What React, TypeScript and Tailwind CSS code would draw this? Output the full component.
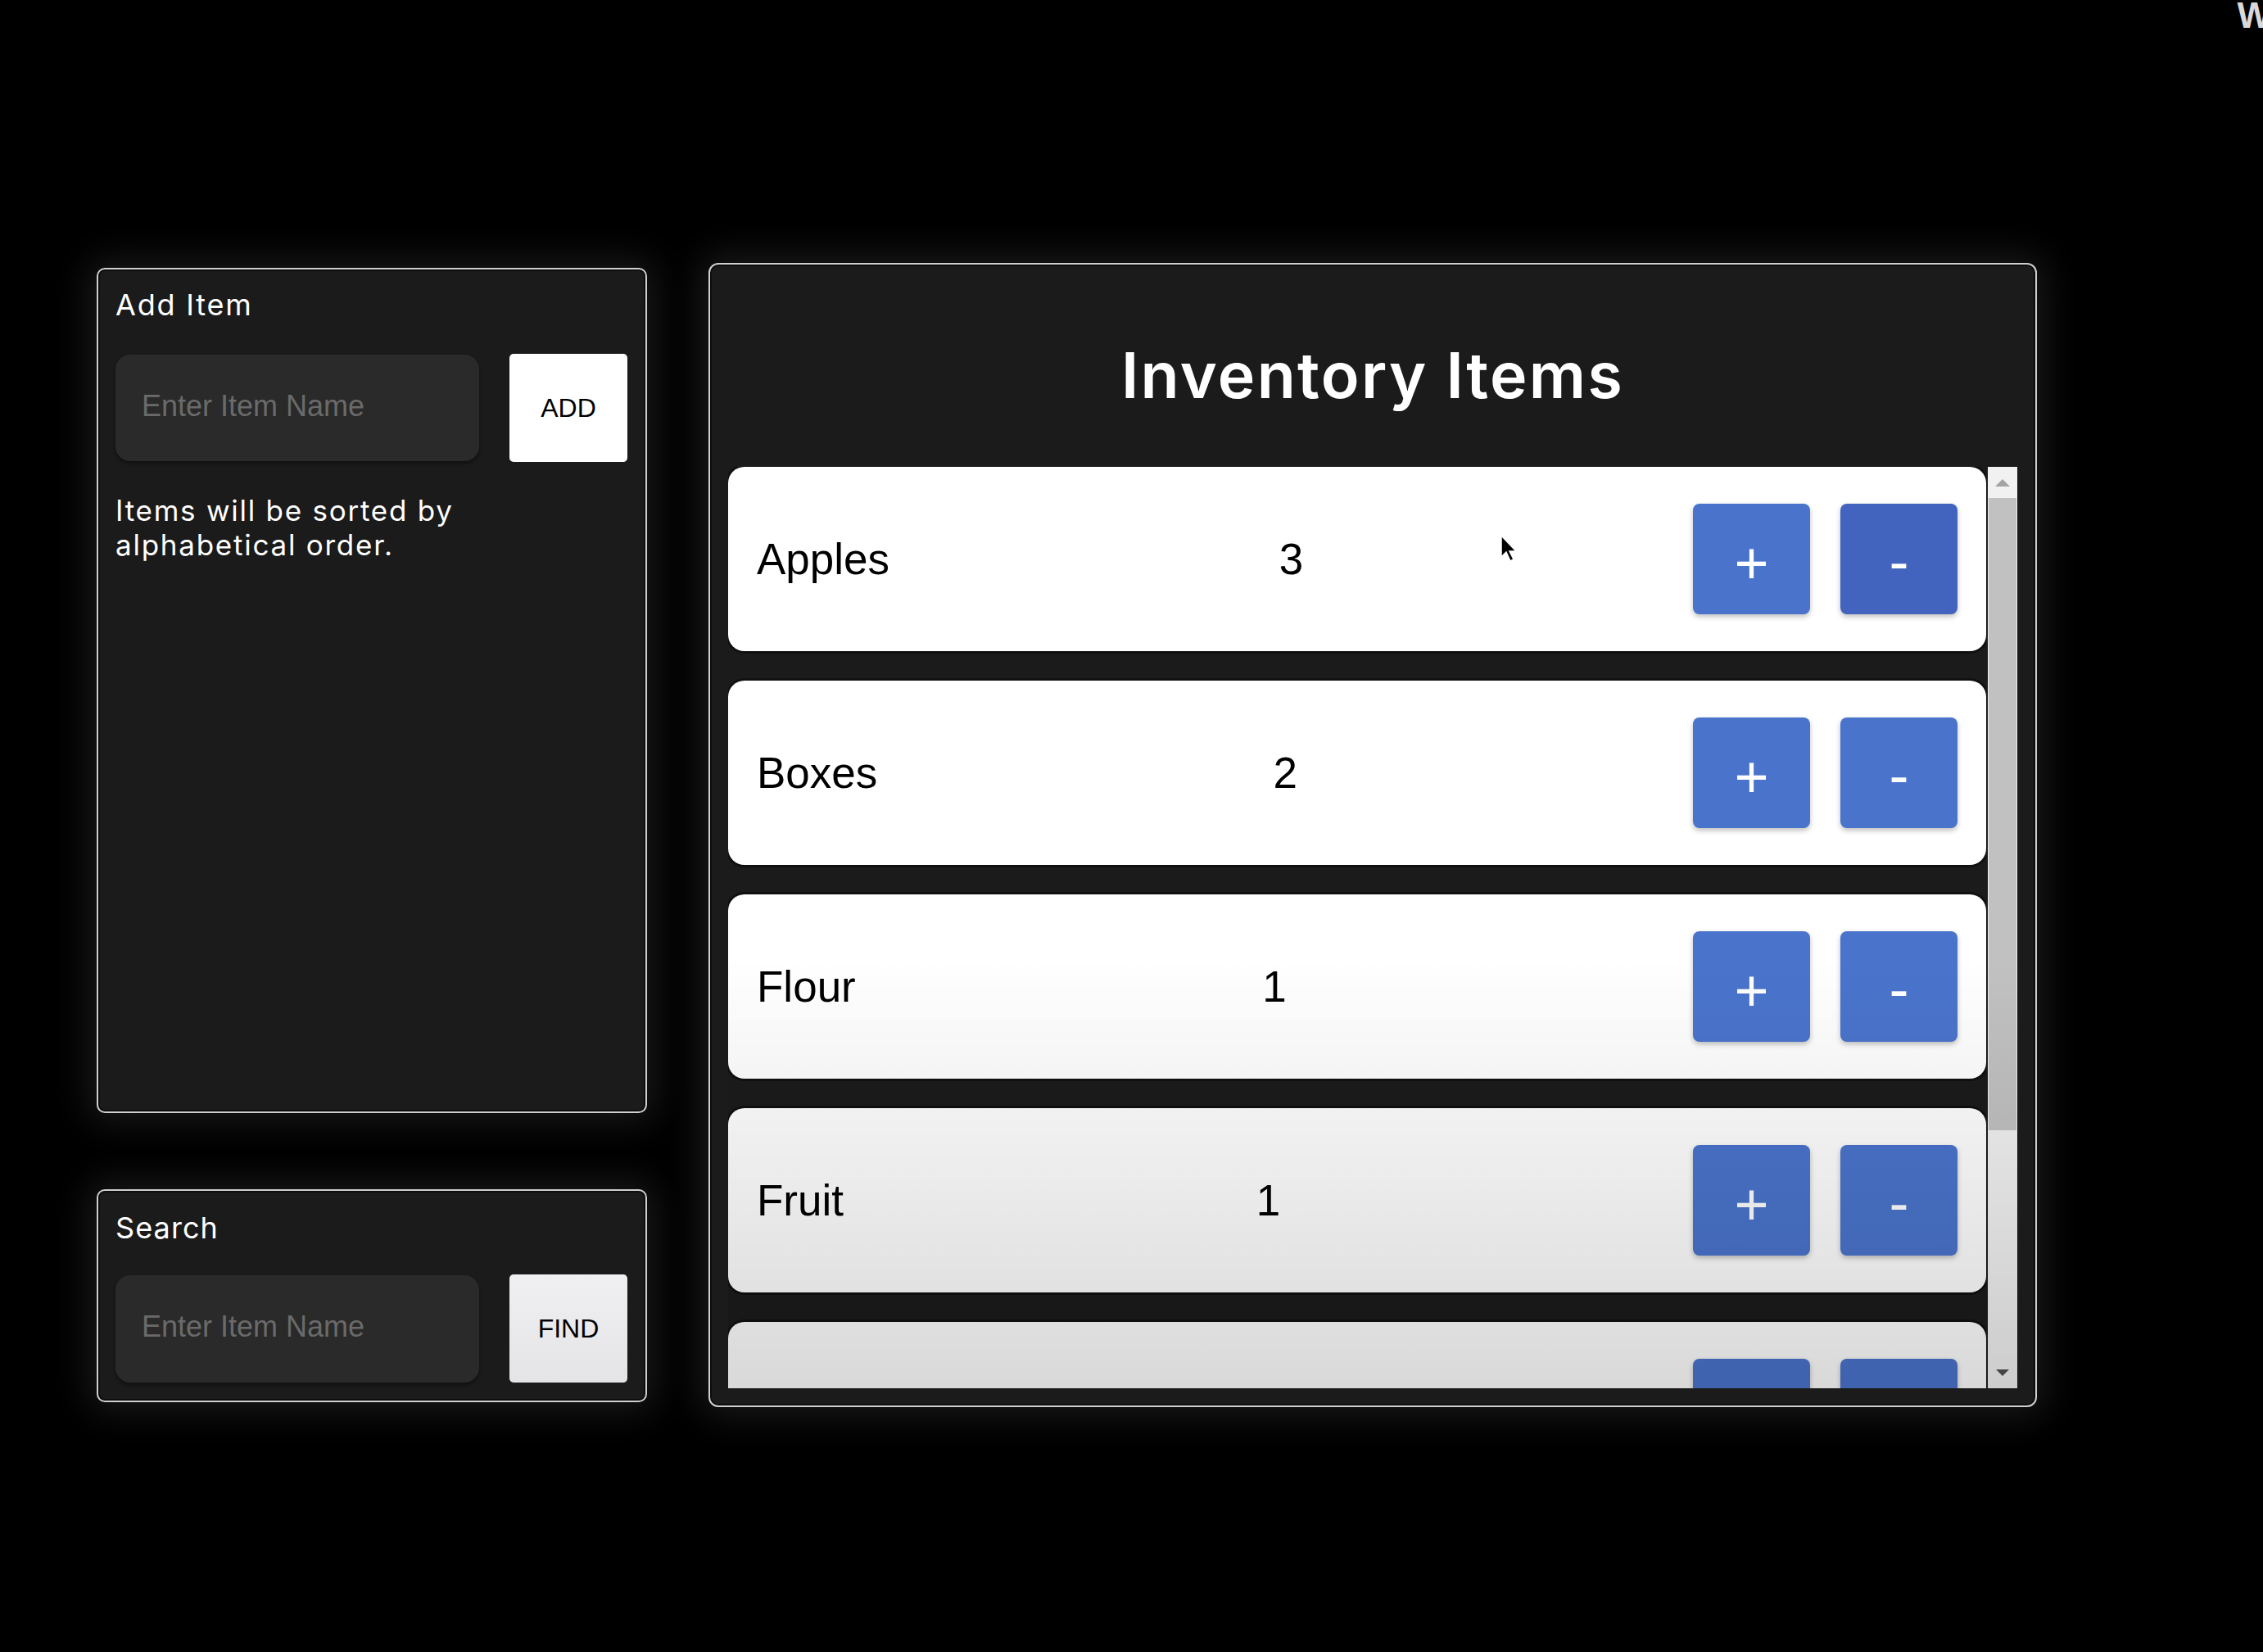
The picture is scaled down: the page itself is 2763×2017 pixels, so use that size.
import { useState } from 'react';

type Item = { name: string; count: number };

const initialItems: Item[] = [
    { name: 'Apples', count: 3 },
    { name: 'Boxes', count: 2 },
    { name: 'Flour', count: 1 },
    { name: 'Fruit', count: 1 },
];

function ItemCard({ item, active }: { item?: Item; active?: boolean }) {
    // item is undefined for the row that is only peeking in at the bottom of the list
    return (
        <div className="flex h-[225px] w-full shrink-0 items-center justify-between rounded-[20px] bg-white px-[35px] shadow-[0_0_0_3px_#101010] font-['Liberation_Sans',Arial,sans-serif] text-[53px] text-black">
            <span>{item?.name}</span>
            <span>{item?.count}</span>
            <div className="flex gap-[37px]">
                <button className="flex h-[135px] w-[143px] items-center justify-center rounded-[8px] bg-[#4a74cc] pt-[8px] text-[72px] leading-none text-white shadow-[0_3px_6px_rgba(0,0,0,0.25)]">
                    {item ? '+' : ''}
                </button>
                <button
                    className={`flex h-[135px] w-[143px] items-center justify-center rounded-[8px] pt-[4px] text-[72px] leading-none text-white shadow-[0_3px_6px_rgba(0,0,0,0.25)] ${active ? 'bg-[#4264be]' : 'bg-[#4a74cc]'}`}
                >
                    {item ? '-' : ''}
                </button>
            </div>
        </div>
    );
}

function Scrollbar() {
    return (
        <div className="flex h-full w-[36px] shrink-0 flex-col bg-[#f1f1f1]">
            <div className="flex h-[38px] items-center justify-center">
                <svg width="18" height="9" viewBox="0 0 18 9">
                    <polygon points="9,0 18,9 0,9" fill="#a3a3a3" />
                </svg>
            </div>
            <div className="mx-[1px] h-[772px] bg-[#c1c1c1]" />
            <div className="flex-1" />
            <div className="flex h-[38px] items-center justify-center">
                <svg width="16" height="8" viewBox="0 0 16 8">
                    <polygon points="0,0 16,0 8,8" fill="#505050" />
                </svg>
            </div>
        </div>
    );
}

export default function App() {
    const [items] = useState<Item[]>(initialItems);

    return (
        <div className="relative min-h-screen overflow-hidden bg-black font-['Inter',sans-serif] text-white">
            <div className="flex items-center gap-[75px] pl-[118px] pt-[321px]">
                <div className="flex w-[672px] flex-col gap-[93px]">
                    <div className="h-[1032px] rounded-[10px] border-2 border-[#cfcfcf] bg-[#1b1b1b] px-[21px] pt-[25px] shadow-[0_0_45px_10px_rgba(255,255,255,0.1),inset_0_0_0_2px_#0d0d0d]">
                        <div className="text-[36px] leading-none tracking-[0.05em]">Add Item</div>
                        <div className="mt-[42px] flex items-center gap-[37px]">
                            <input
                                placeholder="Enter Item Name"
                                className="h-[130px] w-[444px] rounded-[18px] bg-[#2a2a2a] px-[32px] pb-[4px] font-['Liberation_Sans',Arial,sans-serif] text-[36px] text-white outline-none shadow-[0_3px_4px_rgba(0,0,0,0.4)] placeholder:text-[#6a6a6a]"
                            />
                            <button className="h-[132px] w-[144px] rounded-[5px] bg-white font-['Liberation_Sans',Arial,sans-serif] text-[32px] text-black">
                                ADD
                            </button>
                        </div>
                        <p className="mt-[38px] w-[480px] text-[35px] leading-[42px] tracking-[0.05em]">
                            Items will be sorted by alphabetical order.
                        </p>
                    </div>

                    <div className="h-[260px] rounded-[10px] border-2 border-[#cfcfcf] bg-[#1b1b1b] px-[21px] pt-[27px] shadow-[0_0_45px_10px_rgba(255,255,255,0.1),inset_0_0_0_2px_#0d0d0d]">
                        <div className="text-[36px] leading-none tracking-[0.03em]">Search</div>
                        <div className="mt-[39px] flex items-center gap-[37px]">
                            <input
                                placeholder="Enter Item Name"
                                className="h-[131px] w-[444px] rounded-[18px] bg-[#2a2a2a] px-[32px] pb-[4px] font-['Liberation_Sans',Arial,sans-serif] text-[36px] text-white outline-none shadow-[0_3px_4px_rgba(0,0,0,0.4)] placeholder:text-[#6a6a6a]"
                            />
                            <button className="h-[132px] w-[144px] rounded-[5px] bg-gradient-to-b from-[#f0f0f2] to-[#e4e4e6] font-['Liberation_Sans',Arial,sans-serif] text-[32px] text-black">
                                FIND
                            </button>
                        </div>
                    </div>
                </div>

                <div className="flex h-[1397px] w-[1622px] flex-col rounded-[12px] border-2 border-[#cfcfcf] bg-[#1b1b1b] px-[22px] pb-[21px] pt-[97px] shadow-[0_0_45px_10px_rgba(255,255,255,0.1),inset_0_0_0_2px_#0d0d0d]">
                    <h1 className="text-center text-[77px] font-semibold leading-none tracking-[0.03em]">Inventory Items</h1>
                    <div className="relative mt-[73px] flex min-h-0 flex-1 gap-[2px]">
                        <div className="flex min-w-0 flex-1 flex-col gap-[36px] overflow-hidden">
                            {items.map((item, i) => (
                                <ItemCard key={item.name} item={item} active={i === 0} />
                            ))}
                            <ItemCard />
                        </div>
                        <Scrollbar />
                        <div className="pointer-events-none absolute inset-x-0 bottom-0 top-[600px] bg-gradient-to-b from-transparent to-black/15" />
                    </div>
                </div>
            </div>

            {/* mouse pointer */}
            <svg className="pointer-events-none absolute left-[1831px] top-[652px]" width="24" height="36" viewBox="0 0 24 36">
                <path d="M2 2 L2 28 L8 22 L13 33 L17 31 L12 21 L20 21 Z" fill="#000" stroke="#fff" strokeWidth="1.5" />
            </svg>

            <div className="absolute right-[-10px] top-[-14px] font-['Liberation_Sans',Arial,sans-serif] text-[44px] font-bold text-[#d9d9d9]">W</div>
        </div>
    );
}
